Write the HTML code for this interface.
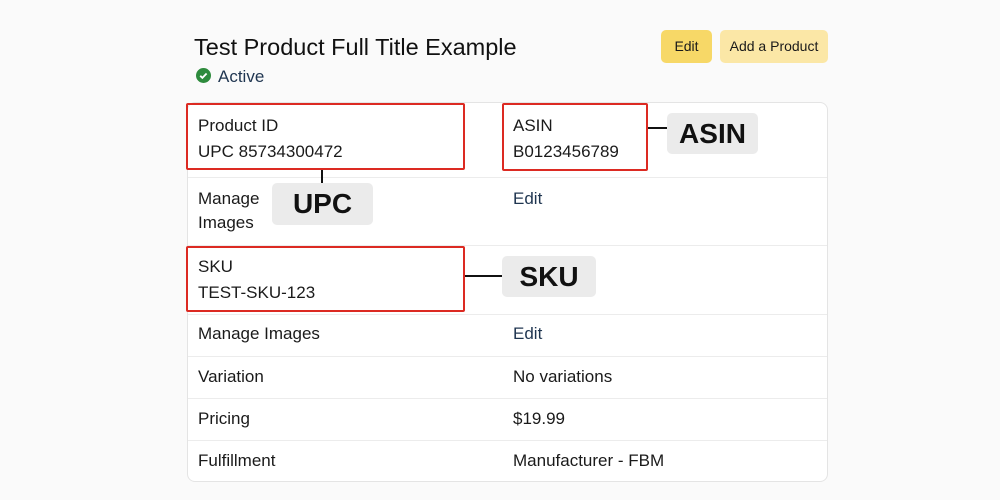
<!DOCTYPE html>
<html><head><style>
*{margin:0;padding:0;box-sizing:border-box}
body{width:1000px;height:500px;background:#fafafa;font-family:"Liberation Sans",sans-serif;color:#1a1a1a;position:relative;overflow:hidden}
.a{position:absolute;white-space:nowrap}
.t{font-size:17px;line-height:20px}
.card{position:absolute;left:187px;top:102px;width:641px;height:380px;background:#fff;border:1px solid #e4e4e4;border-radius:8px}
.sep{position:absolute;left:188px;width:639px;height:1px;background:#ececec}
.red{position:absolute;border:2.5px solid #dc2a22;border-radius:2px}
.badge{position:absolute;background:#ebebeb;border-radius:5px;font-weight:bold;font-size:28px;color:#111;text-align:center}
.line{position:absolute;background:#111}
.blue{color:#1f3550}
</style></head><body>
<div class="a" style="left:194px;top:33px;font-size:23.5px;line-height:28px;color:#111">Test Product Full Title Example</div>
<svg class="a" style="left:196px;top:68px" width="15" height="15" viewBox="0 0 16 16"><circle cx="8" cy="8" r="8" fill="#2e8b3d"/><path d="M4.5 8.3l2.3 2.2 4.5-4.6" stroke="#fff" stroke-width="2" fill="none"/></svg>
<div class="a t blue" style="left:218px;top:67px">Active</div>
<div class="a" style="left:661px;top:30px;width:51px;height:33px;background:#f7d867;border-radius:5px;font-size:14px;line-height:33px;text-align:center">Edit</div>
<div class="a" style="left:720px;top:30px;width:108px;height:33px;background:#fbe7a6;border-radius:5px;font-size:14px;line-height:33px;text-align:center">Add a Product</div>
<div class="card"></div>
<div class="sep" style="top:177px"></div>
<div class="sep" style="top:245px"></div>
<div class="sep" style="top:314px"></div>
<div class="sep" style="top:356px"></div>
<div class="sep" style="top:398px"></div>
<div class="sep" style="top:440px"></div>
<div class="a t" style="left:198px;top:116px">Product ID</div>
<div class="a t" style="left:198px;top:142px">UPC 85734300472</div>
<div class="a t" style="left:513px;top:116px">ASIN</div>
<div class="a t" style="left:513px;top:142px">B0123456789</div>
<div class="a t" style="left:198px;top:189px">Manage</div>
<div class="a t" style="left:198px;top:213px">Images</div>
<div class="a t blue" style="left:513px;top:189px">Edit</div>
<div class="a t" style="left:198px;top:257px">SKU</div>
<div class="a t" style="left:198px;top:283px">TEST-SKU-123</div>
<div class="a t" style="left:198px;top:324px">Manage Images</div>
<div class="a t blue" style="left:513px;top:324px">Edit</div>
<div class="a t" style="left:198px;top:367px">Variation</div>
<div class="a t" style="left:513px;top:367px">No variations</div>
<div class="a t" style="left:198px;top:409px">Pricing</div>
<div class="a t" style="left:513px;top:409px">$19.99</div>
<div class="a t" style="left:198px;top:451px">Fulfillment</div>
<div class="a t" style="left:513px;top:451px">Manufacturer - FBM</div>
<div class="red" style="left:186px;top:103px;width:279px;height:67px"></div>
<div class="red" style="left:502px;top:103px;width:146px;height:68px"></div>
<div class="red" style="left:186px;top:246px;width:279px;height:66px"></div>
<div class="line" style="left:648px;top:127px;width:19px;height:2px"></div>
<div class="line" style="left:321px;top:170px;width:2px;height:13px"></div>
<div class="line" style="left:465px;top:275px;width:37px;height:2px"></div>
<div class="badge" style="left:667px;top:113px;width:91px;height:41px;line-height:41px">ASIN</div>
<div class="badge" style="left:272px;top:183px;width:101px;height:42px;line-height:42px">UPC</div>
<div class="badge" style="left:502px;top:256px;width:94px;height:41px;line-height:41px">SKU</div>
</body></html>
